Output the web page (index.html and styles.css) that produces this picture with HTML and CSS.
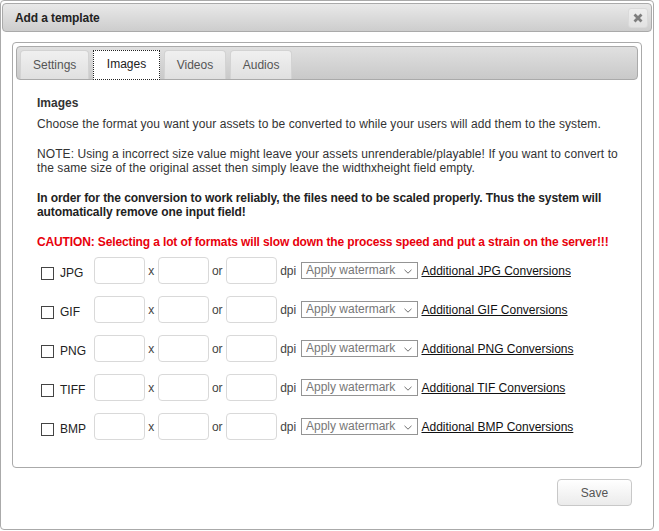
FILE: index.html
```html
<!DOCTYPE html>
<html lang="en">
<head>
<meta charset="utf-8">
<title>Add a template</title>
<link rel="stylesheet" href="styles.css">
</head>
<body>
<div class="dialog">
  <div class="titlebar">
    <span class="title">Add a template</span>
    <button class="close" type="button" aria-label="Close">
      <svg width="10" height="10" viewBox="0 0 10 10"><path d="M1.5 1.5 L8.5 8.5 M8.5 1.5 L1.5 8.5" stroke="#7e7e7e" stroke-width="2.8" fill="none"/></svg>
    </button>
  </div>
  <div class="tabs">
    <ul class="tab-nav">
      <li class="tab">Settings</li>
      <li class="tab active">Images</li>
      <li class="tab">Videos</li>
      <li class="tab">Audios</li>
    </ul>
    <div class="panel">
      <h3 class="panel-title">Images</h3>
      <p>Choose the format you want your assets to be converted to while your users will add them to the system.</p>
      <p>NOTE: Using a incorrect size value might leave your assets unrenderable/playable! If you want to convert to<br>the same size of the original asset then simply leave the widthxheight field empty.</p>
      <p class="strong">In order for the conversion to work reliably, the files need to be scaled properly. Thus the system will<br>automatically remove one input field!</p>
      <p class="caution">CAUTION: Selecting a lot of formats will slow down the process speed and put a strain on the server!!!</p>
      <div class="formats">
        <div class="format-row">
          <input type="checkbox" class="check">
          <span class="fmt">JPG</span>
          <input type="text" class="num"><span class="sep">x</span><input type="text" class="num"><span class="sep">or</span><input type="text" class="num"><span class="sep">dpi</span>
          <span class="select-wrap"><select class="wm"><option>Apply watermark</option></select><svg class="chev" width="8" height="5" viewBox="0 0 8 5"><path d="M0.5 0.8 L4 4.2 L7.5 0.8" stroke="#6f6f6f" stroke-width="1" fill="none"/></svg></span>
          <a href="#" class="more">Additional JPG Conversions</a>
        </div>
        <div class="format-row">
          <input type="checkbox" class="check">
          <span class="fmt">GIF</span>
          <input type="text" class="num"><span class="sep">x</span><input type="text" class="num"><span class="sep">or</span><input type="text" class="num"><span class="sep">dpi</span>
          <span class="select-wrap"><select class="wm"><option>Apply watermark</option></select><svg class="chev" width="8" height="5" viewBox="0 0 8 5"><path d="M0.5 0.8 L4 4.2 L7.5 0.8" stroke="#6f6f6f" stroke-width="1" fill="none"/></svg></span>
          <a href="#" class="more">Additional GIF Conversions</a>
        </div>
        <div class="format-row">
          <input type="checkbox" class="check">
          <span class="fmt">PNG</span>
          <input type="text" class="num"><span class="sep">x</span><input type="text" class="num"><span class="sep">or</span><input type="text" class="num"><span class="sep">dpi</span>
          <span class="select-wrap"><select class="wm"><option>Apply watermark</option></select><svg class="chev" width="8" height="5" viewBox="0 0 8 5"><path d="M0.5 0.8 L4 4.2 L7.5 0.8" stroke="#6f6f6f" stroke-width="1" fill="none"/></svg></span>
          <a href="#" class="more">Additional PNG Conversions</a>
        </div>
        <div class="format-row">
          <input type="checkbox" class="check">
          <span class="fmt">TIFF</span>
          <input type="text" class="num"><span class="sep">x</span><input type="text" class="num"><span class="sep">or</span><input type="text" class="num"><span class="sep">dpi</span>
          <span class="select-wrap"><select class="wm"><option>Apply watermark</option></select><svg class="chev" width="8" height="5" viewBox="0 0 8 5"><path d="M0.5 0.8 L4 4.2 L7.5 0.8" stroke="#6f6f6f" stroke-width="1" fill="none"/></svg></span>
          <a href="#" class="more">Additional TIF Conversions</a>
        </div>
        <div class="format-row">
          <input type="checkbox" class="check">
          <span class="fmt">BMP</span>
          <input type="text" class="num"><span class="sep">x</span><input type="text" class="num"><span class="sep">or</span><input type="text" class="num"><span class="sep">dpi</span>
          <span class="select-wrap"><select class="wm"><option>Apply watermark</option></select><svg class="chev" width="8" height="5" viewBox="0 0 8 5"><path d="M0.5 0.8 L4 4.2 L7.5 0.8" stroke="#6f6f6f" stroke-width="1" fill="none"/></svg></span>
          <a href="#" class="more">Additional BMP Conversions</a>
        </div>
      </div>
    </div>
  </div>
  <div class="buttons">
    <button class="save" type="button">Save</button>
  </div>
</div>
</body>
</html>
```

FILE: styles.css
```css
html, body {
  margin: 0;
  padding: 0;
  background: #fff;
}

body {
  font-family: "Liberation Sans", Arial, sans-serif;
  font-size: 12px;
  line-height: 14px;
  color: #222;
}

.dialog {
  width: 654px;
  box-sizing: border-box;
  border: 1px solid #aaa;
  border-radius: 4px;
  padding: 2px 1px 0;
  background: #fff;
}

.titlebar {
  height: 29px;
  box-sizing: border-box;
  border: 1px solid #aaa;
  border-radius: 4px;
  background: linear-gradient(#e9e9e9, #cdcdcd);
  display: flex;
  align-items: center;
  justify-content: space-between;
  padding: 0 3px 0 12px;
}

.title {
  font-weight: bold;
  color: #222;
  letter-spacing: -0.1px;
}

.close {
  width: 20px;
  height: 20px;
  box-sizing: border-box;
  padding: 0;
  border: 1px solid #dadada;
  border-radius: 3px;
  background: linear-gradient(#eeeeee, #e2e2e2);
  display: flex;
  align-items: center;
  justify-content: center;
}

.tabs {
  margin: 10px 10px 0;
  border: 1px solid #aaa;
  border-radius: 4px;
  padding: 3px;
  background: #fff;
}

.tab-nav {
  list-style: none;
  margin: 0;
  padding: 3px 3px 0;
  display: flex;
  align-items: flex-start;
  gap: 3.5px;
  border: 1px solid #aaa;
  border-radius: 4px;
  background: linear-gradient(#e0e0e0, #c9c9c9);
}

.tab {
  height: 29px;
  box-sizing: border-box;
  padding: 7px 12px 0;
  border: 1px solid #d3d3d3;
  border-bottom: 0;
  border-radius: 4px 4px 0 0;
  background: linear-gradient(#f0f0f0, #e0e0e0);
  color: #555;
}

.tab.active {
  height: 30px;
  margin-bottom: -1px;
  padding: 6px 13px 0;
  border: 1px dotted #222;
  border-radius: 0;
  background: #fff;
  color: #212121;
}

.panel {
  padding: 16px 0 24px 21px;
}

.panel-title {
  margin: 0 0 7px;
  font-size: 12px;
  line-height: 14px;
  font-weight: bold;
  color: #333;
}

.panel p {
  margin: 0 0 16px;
  color: #333;
  letter-spacing: 0.08px;
}

.panel p.strong {
  font-weight: bold;
  color: #222;
  letter-spacing: -0.09px;
}

.panel p.caution {
  font-weight: bold;
  color: #e8000b;
  margin-bottom: 8px;
  letter-spacing: -0.13px;
}

.format-row {
  display: flex;
  align-items: center;
  height: 27px;
  margin-bottom: 12px;
}

.format-row:last-child {
  margin-bottom: 0;
}

.check {
  appearance: none;
  -webkit-appearance: none;
  width: 13px;
  height: 13px;
  box-sizing: border-box;
  margin: 6px 0 0 4px;
  border: 1px solid #444;
  border-radius: 0;
  background: #fff;
}

.fmt {
  width: 34px;
  margin: 5px 0 0 6px;
  color: #222;
}

.num {
  width: 51px;
  height: 27px;
  box-sizing: border-box;
  margin: 0;
  border: 1px solid #d9d9d9;
  border-radius: 4px;
  background: #fff;
  font: inherit;
  padding: 0 4px;
}

.sep {
  margin: 0 3.3px;
  color: #444;
}

.select-wrap {
  position: relative;
  display: inline-flex;
  margin-left: 1.5px;
}

.wm {
  appearance: none;
  -webkit-appearance: none;
  width: 117px;
  height: 17px;
  box-sizing: border-box;
  margin: 0;
  padding: 0 0 0 4px;
  border: 1px solid #949494;
  border-radius: 0;
  background: #fff;
  color: #777;
  font-family: inherit;
  font-size: 12px;
  line-height: 15px;
}

.chev {
  position: absolute;
  right: 6px;
  top: 7px;
}

.more {
  margin-left: 3.5px;
  color: #111;
  text-decoration: underline;
}

.buttons {
  display: flex;
  justify-content: flex-end;
  margin-top: 11px;
  padding: 0 20px 23px 0;
}

.save {
  width: 75px;
  height: 27px;
  box-sizing: border-box;
  margin: 0;
  padding: 0;
  border: 1px solid #c8c8c8;
  border-radius: 4px;
  background: linear-gradient(#ffffff, #ebebeb);
  color: #555;
  font-family: inherit;
  font-size: 12px;
}
```
